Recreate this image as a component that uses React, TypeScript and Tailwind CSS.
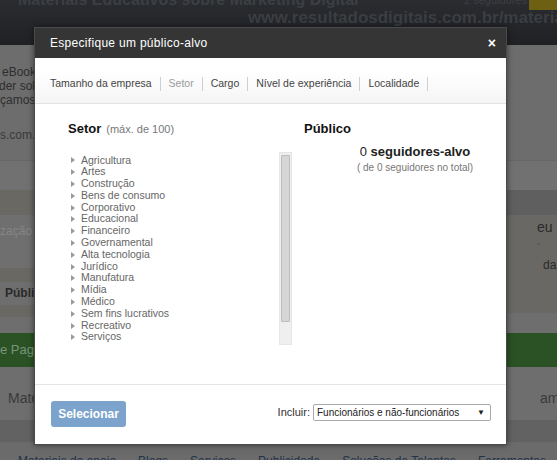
import React from "react";

const sectors = [
  "Agricultura",
  "Artes",
  "Construção",
  "Bens de consumo",
  "Corporativo",
  "Educacional",
  "Financeiro",
  "Governamental",
  "Alta tecnologia",
  "Jurídico",
  "Manufatura",
  "Mídia",
  "Médico",
  "Sem fins lucrativos",
  "Recreativo",
  "Serviços",
];

const tabs = ["Tamanho da empresa", "Setor", "Cargo", "Nível de experiência", "Localidade"];

function Backdrop() {
  return (
    <div className="flex flex-col w-full h-full">
      {/* top page band */}
      <div className="h-[45px] shrink-0 bg-gradient-to-b from-[#2a2c30] to-[#1f2124] relative overflow-hidden">
        <div className="flex justify-between items-start -mt-[9px] pl-[18px] pr-[30px] text-[16px] font-bold text-[#3c3f43] leading-[18px]">
          <span>Materiais Educativos sobre Marketing Digital</span>
          <span className="text-[11px] font-normal">2 seguidores</span>
        </div>
        <div className="pl-[248px] text-[17px] font-bold text-[#3b3e42] leading-[18px] whitespace-nowrap">
          www.resultadosdigitais.com.br/materiais-educ
        </div>
        <span className="absolute right-0 top-0 w-[28px] h-[10px] bg-[#6e6012]" />
      </div>
      <div className="flex flex-1 min-h-0">
        {/* left strip */}
        <div className="w-[34px] shrink-0 flex flex-col overflow-hidden text-[12px] whitespace-nowrap">
          <div className="h-[65px] shrink-0 bg-[#6d6d6d] pt-[20px] leading-[14px] text-[#2e2e2e] pl-[2px]">
            <div>eBook</div>
            <div className="-ml-[3px]">der sobr</div>
            <div className="-ml-[2px]">çamos c</div>
          </div>
          <div className="h-[50px] shrink-0 bg-[#6d6d6d] pt-[18px] leading-[14px] text-[#3a3a3a]">s.com...</div>
          <div className="h-[30px] shrink-0 bg-[#717171] border-t border-[#666]" />
          <div className="h-[25px] shrink-0 bg-[#6a6863]" />
          <div className="h-[53px] shrink-0 bg-[#6f6f6f] pt-[9px] leading-[14px] text-[#858585]">zação</div>
          <div className="h-[14px] shrink-0 bg-[#6a6863]" />
          <div className="h-[23px] shrink-0 bg-[#6e6e6e] font-bold text-[#2a2a2a] leading-[23px] pl-[5px]">Públic</div>
          <div className="h-[12px] shrink-0 bg-[#6a6863]" />
          <div className="h-[16px] shrink-0 bg-[#6e6e6e]" />
          <div className="h-[34px] shrink-0 bg-[#2a5224] text-[13px] text-[#7a947a] leading-[34px]">e Page</div>
          <div className="h-[53px] shrink-0 bg-[#6e6e6e] text-[14px] text-[#3a3a3a] pl-[8px] pt-[23px] leading-[16px]">Mater</div>
          <div className="h-[22px] shrink-0 bg-[#626262]" />
          <div className="flex-1 bg-[#6b6b6b]" />
        </div>
        <div className="flex-1" />
        {/* right strip */}
        <div className="w-[50px] shrink-0 flex flex-col overflow-hidden text-[12px] whitespace-nowrap">
          <div className="h-[115px] shrink-0 bg-[#6d6d6d]" />
          <div className="h-[30px] shrink-0 bg-[#717171] border-t border-[#666]" />
          <div className="h-[25px] shrink-0 bg-[#5f5f5f]" />
          <div className="h-[98px] shrink-0 bg-[#6a6864] pl-[30px] pt-[5px] leading-[14px] text-[#2a2a2a]">
            <div className="text-[14px]">eu</div>
            <div className="text-[#444]">.</div>
            <div className="mt-[10px] pl-[6px]">da</div>
          </div>
          <div className="h-[20px] shrink-0 bg-[#6e6e6e]" />
          <div className="h-[34px] shrink-0 bg-[#2a5224]" />
          <div className="h-[53px] shrink-0 bg-[#6e6e6e] text-[14px] text-[#3a3a3a] pl-[33px] pt-[23px] leading-[16px]">am</div>
          <div className="h-[22px] shrink-0 bg-[#626262]" />
          <div className="flex-1 bg-[#6b6b6b]" />
        </div>
      </div>
      <div className="absolute left-0 right-0 bottom-[-10px] flex gap-[22px] pl-[18px] text-[12px] text-[#22324a] whitespace-nowrap">
        <span>Materiais de apoio</span>
        <span>Blogs</span>
        <span>Serviços</span>
        <span>Publicidade</span>
        <span>Soluções de Talentos</span>
        <span>Ferramentas</span>
        <span>Mobile</span>
        <span>Desenvolvedores</span>
      </div>
    </div>
  );
}

function Arrow() {
  return (
    <svg width="4" height="6" viewBox="0 0 4 6" className="shrink-0">
      <path d="M0 0 L4 3 L0 6 Z" fill="#9a9a9a" />
    </svg>
  );
}

export default function App() {
  return (
    <div
      className="relative w-[557px] h-[460px] overflow-hidden bg-[#6b6b6b]"
      style={{ fontFamily: '"Liberation Sans", Arial, sans-serif' }}
    >
      <Backdrop />

      {/* modal */}
      <div className="absolute left-[34px] top-[27px] w-[473px] h-[418px] bg-white border border-[#4a4a4a] flex flex-col shadow-[0_0_6px_rgba(0,0,0,0.5)]">
        <div className="h-[30px] shrink-0 bg-[#353535] flex items-center justify-between pl-[15px] pr-[10px]">
          <span className="text-white text-[12px] tracking-[0.3px]">Especifique um público-alvo</span>
          <span className="text-white text-[14px] font-bold leading-none">×</span>
        </div>

        <div className="h-[46px] shrink-0 bg-gradient-to-b from-white from-30% to-[#f5f5f5] border-b border-[#e2e2e2] flex items-center pl-[15px] pt-[6px] text-[10.5px]">
          {tabs.map((t) => (
            <React.Fragment key={t}>
              <span className={t === "Setor" ? "text-[#9a9a9a]" : "text-[#444]"}>{t}</span>
              <span className="mx-[8px] w-px h-[14px] bg-[#cfcfcf]" />
            </React.Fragment>
          ))}
        </div>

        <div className="flex-1 flex">
          {/* left column */}
          <div className="w-[257px] pl-[33px] pt-[15px]">
            <div className="flex items-baseline gap-[5px]">
              <span className="text-[13px] font-bold text-[#111]">Setor</span>
              <span className="text-[11px] text-[#777]">(máx. de 100)</span>
            </div>
            <div className="mt-[13px] flex h-[193px]">
              <ul className="flex-1 pt-[3px] pl-[3px]">
                {sectors.map((s) => (
                  <li key={s} className="flex items-center gap-[6px] h-[11.8px] text-[10.5px] text-[#666] leading-[11.8px]">
                    <Arrow />
                    <span>{s}</span>
                  </li>
                ))}
              </ul>
              <div className="w-[13px] bg-[#efefef] border border-[#e6e6e6] flex flex-col items-center pt-[2px]">
                <div className="w-[9px] h-[167px] bg-[#d6d6d6] border border-[#bdbdbd] rounded-[1px]" />
              </div>
            </div>
          </div>

          {/* right column */}
          <div className="flex-1 pl-[12px] pt-[15px]">
            <div className="text-[13px] font-bold text-[#111]">Público</div>
            <div className="pl-[20px] mt-[5px] flex flex-col items-center">
              <div className="text-[13px] text-[#222] leading-[16px]">
                0 <span className="font-bold">seguidores-alvo</span>
              </div>
              <div className="text-[10px] text-[#777] leading-[12px] mt-[2px]">( de 0 seguidores no total)</div>
            </div>
          </div>
        </div>

        <div className="h-[60px] shrink-0 border-t border-[#e5e5e5] flex items-center justify-between pl-[16px] pr-[15px]">
          <button className="w-[75px] h-[26px] mt-[-2px] rounded-[3px] bg-[#7ba3cc] text-white text-[12px] font-bold">
            Selecionar
          </button>
          <div className="flex items-center gap-[3px] mt-[-4px]">
            <span className="text-[11px] text-[#333]">Incluir:</span>
            <div className="w-[178px] h-[17px] border border-[#a9a9a9] rounded-[2px] flex items-center justify-between pl-[3px] pr-[5px] text-[10px] text-[#222]">
              <span>Funcionários e não-funcionários</span>
              <span className="text-[8px] text-[#222]">▼</span>
            </div>
          </div>
        </div>
      </div>
    </div>
  );
}
